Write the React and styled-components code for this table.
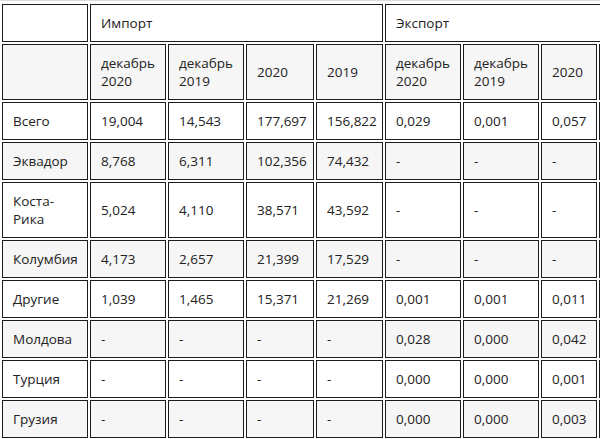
import styled, { createGlobalStyle } from 'styled-components';

const GlobalStyle = createGlobalStyle`
html, body {
  margin: 0;
  padding: 0;
  background: #fff;
  overflow: hidden;
}
`

const Wrapper = styled.div`
width: 600px;
overflow: hidden;
border-top: 1px solid #dcdcdc;
padding-top: 1px;
font-family: "Open Sans", "Noto Sans", sans-serif;
font-size: 13.5px;
line-height: 18px;
color: #222;
`

const Table = styled.table`
table-layout: fixed;
border-collapse: separate;
border-spacing: 2px;
width: 669px;
`

const Row = styled.tr`
background: ${p => (p.$gray ? '#f6f6f6' : '#fff')};
`

const Cell = styled.td`
border: 1px solid #1c1c1c;
padding: 9px 10px;
vertical-align: middle;
text-align: left;
font-weight: normal;
white-space: nowrap;
overflow: hidden;
`

// last column is cut off by the window edge, only its border shows
const colWidths = [86, 76, 76, 68, 67, 76, 76, 56, 68];

const subHeads = [
    ['декабрь', '2020'],
    ['декабрь', '2019'],
    ['2020'],
    ['2019'],
    ['декабрь', '2020'],
    ['декабрь', '2019'],
    ['2020'],
    [],
];

const rows = [
    [['Всего'], '19,004', '14,543', '177,697', '156,822', '0,029', '0,001', '0,057', ''],
    [['Эквадор'], '8,768', '6,311', '102,356', '74,432', '-', '-', '-', ''],
    [['Коста-', 'Рика'], '5,024', '4,110', '38,571', '43,592', '-', '-', '-', ''],
    [['Колумбия'], '4,173', '2,657', '21,399', '17,529', '-', '-', '-', ''],
    [['Другие'], '1,039', '1,465', '15,371', '21,269', '0,001', '0,001', '0,011', ''],
    [['Молдова'], '-', '-', '-', '-', '0,028', '0,000', '0,042', ''],
    [['Турция'], '-', '-', '-', '-', '0,000', '0,000', '0,001', ''],
    [['Грузия'], '-', '-', '-', '-', '0,000', '0,000', '0,003', ''],
];

const Lines = ({ parts }) => (
    <>
        {parts.map((p, i) => (
            <span key={i}>
                {i > 0 && <br />}
                {p}
            </span>
        ))}
    </>
)

const App = () => {
    return (
        <>
            <GlobalStyle />
            <Wrapper>
                <Table>
                    <colgroup>
                        {colWidths.map((w, i) => (
                            <col key={i} style={{ width: w }} />
                        ))}
                    </colgroup>
                    <thead>
                        <Row>
                            <Cell as="th"></Cell>
                            <Cell as="th" colSpan={4}>Импорт</Cell>
                            <Cell as="th" colSpan={4}>Экспорт</Cell>
                        </Row>
                        <Row $gray>
                            <Cell as="th"></Cell>
                            {subHeads.map((h, i) => (
                                <Cell as="th" key={i}><Lines parts={h} /></Cell>
                            ))}
                        </Row>
                    </thead>
                    <tbody>
                        {rows.map((r, i) => (
                            <Row key={i} $gray={i % 2 === 1}>
                                <Cell><Lines parts={r[0]} /></Cell>
                                {r.slice(1).map((v, j) => (
                                    <Cell key={j}>{v}</Cell>
                                ))}
                            </Row>
                        ))}
                    </tbody>
                </Table>
            </Wrapper>
        </>
    )
}

export default App;
